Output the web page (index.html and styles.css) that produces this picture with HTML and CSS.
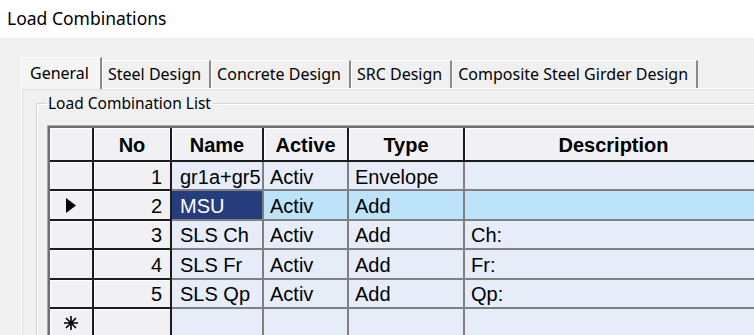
FILE: index.html
```html
<!DOCTYPE html>
<html lang="en">
<head>
  <meta charset="UTF-8">
  <meta name="viewport" content="width=device-width, initial-scale=1.0">
  <title>Load Combinations</title>
  <link rel="stylesheet" href="styles.css">
</head>
<body>
  <div class="titlebar">Load Combinations</div>

  <div class="dialog">
    <div class="tabs">
      <div class="tab active">General</div>
      <div class="tab">Steel Design</div>
      <div class="tab">Concrete Design</div>
      <div class="tab">SRC Design</div>
      <div class="tab">Composite Steel Girder Design</div>
    </div>

    <div class="tab-page">
      <fieldset class="group">
        <legend>Load Combination List</legend>

        <div class="grid-frame">
          <table class="grid">
            <colgroup>
              <col class="c-sel">
              <col class="c-no">
              <col class="c-name">
              <col class="c-active">
              <col class="c-type">
              <col class="c-desc">
            </colgroup>
            <tr class="head">
              <th></th>
              <th>No</th>
              <th>Name</th>
              <th>Active</th>
              <th>Type</th>
              <th>Description</th>
            </tr>
            <tr>
              <td class="fix"></td>
              <td class="fix num">1</td>
              <td>gr1a+gr5</td>
              <td>Activ</td>
              <td>Envelope</td>
              <td></td>
            </tr>
            <tr class="selected">
              <td class="fix marker">
                <svg width="10" height="15" viewBox="0 0 10 15"><path d="M0 0 L10 7.5 L0 15 Z" fill="#000"/></svg>
              </td>
              <td class="fix num">2</td>
              <td class="current">MSU</td>
              <td>Activ</td>
              <td>Add</td>
              <td></td>
            </tr>
            <tr>
              <td class="fix"></td>
              <td class="fix num">3</td>
              <td>SLS Ch</td>
              <td>Activ</td>
              <td>Add</td>
              <td>Ch:</td>
            </tr>
            <tr>
              <td class="fix"></td>
              <td class="fix num">4</td>
              <td>SLS Fr</td>
              <td>Activ</td>
              <td>Add</td>
              <td>Fr:</td>
            </tr>
            <tr>
              <td class="fix"></td>
              <td class="fix num">5</td>
              <td>SLS Qp</td>
              <td>Activ</td>
              <td>Add</td>
              <td>Qp:</td>
            </tr>
            <tr class="new-row">
              <td class="fix marker">
                <svg width="14" height="14" viewBox="0 0 14 14">
                  <path d="M7 0 V14 M0 7 H14 M2 2 L12 12 M12 2 L2 12" stroke="#000" stroke-width="1.6" fill="none"/>
                </svg>
              </td>
              <td class="fix"></td>
              <td></td>
              <td></td>
              <td></td>
              <td></td>
            </tr>
          </table>
        </div>
      </fieldset>
    </div>
  </div>
</body>
</html>
```

FILE: styles.css
```css
body {
  margin: 0;
  background: #f0f0f0;
  font-family: "Noto Sans", sans-serif;
  color: #000;
  overflow: hidden;
  width: 754px;
  height: 335px;
}

.titlebar {
  background: #fff;
  height: 38px;
  line-height: 36px;
  padding-left: 7px;
  font-size: 17.5px;
}

.dialog {
  padding: 18px 0 0 21px;
}

/* tab strip */
.tabs {
  display: flex;
  align-items: flex-end;
  height: 32px;
}
.tab {
  height: 28px;
  line-height: 27px;
  padding: 0 8px 0 5px;
  font-size: 16px;
  background: #f0f0f0;
  border-top: 1px solid #fff;
  border-left: 1px solid #fff;
  border-right: 2px solid #8a8a8a;
  box-sizing: border-box;
  white-space: nowrap;
}
.tab.active {
  height: 32px;
  line-height: 30px;
  padding: 0 11px 0 8px;
  margin-bottom: -1px;
  position: relative;
  background: #f5f5f5;
}

.tab-page {
  width: 800px;
  border-top: 1px solid #fff;
  border-left: 1px solid #fff;
  box-shadow: inset 1px 1px 0 #e2e2e2;
  padding: 6px 0 0 14px;
  height: 300px;
}

/* group box */
.group {
  margin: 0;
  width: 760px;
  height: 280px;
  padding: 0 0 0 9px;
  border: 1px solid #d5d5d5;
  box-shadow: inset 1px 1px 0 #fff, 1px 1px 0 #fff;
}
.group legend {
  padding: 0 2px;
  font-size: 15.5px;
  line-height: 16px;
}

/* grid */
.grid-frame {
  margin: 15px 0 0 2px;
  display: inline-block;
  border: 2px solid #6e6e6e;
  box-shadow: 0 0 0 1px #a8a8a8;
}
.grid {
  border-collapse: separate;
  border-spacing: 0;
  table-layout: fixed;
  width: 714px;
  font-family: "Liberation Sans", Arial, sans-serif;
  font-size: 20px;
}
.c-sel { width: 44px; }
.c-no { width: 78px; }
.c-name { width: 92px; }
.c-active { width: 85px; }
.c-type { width: 116px; }
.c-desc { width: 299px; }

.grid th,
.grid td {
  box-sizing: border-box;
  padding: 3px 6px 0;
  white-space: nowrap;
  overflow: hidden;
  text-align: left;
  background: #e6edf8;
  border-right: 2px solid #808080;
  border-bottom: 2px solid #808080;
}
.grid tr {
  height: 29.4px;
}
.grid tr.head {
  height: 34px;
}
.grid th,
.grid td.fix {
  background: #f0f0f5;
  border-right-color: #1c1c1c;
  border-bottom-color: #1c1c1c;
  box-shadow: inset 1px 1px 0 #fff;
}
.grid th {
  font-weight: bold;
  text-align: center;
  padding-top: 2px;
}
.grid td.num {
  text-align: right;
  padding-right: 8px;
}
.grid td:nth-child(3) {
  padding-left: 8px;
}
.grid td.marker {
  text-align: center;
  padding: 0;
  line-height: 0;
}
.grid tr.selected td {
  background: #bde3fb;
}
.grid tr.selected td.fix {
  background: #f0f0f5;
}
.grid tr.selected td.current {
  background: #263d7d;
  color: #fff;
}
```
